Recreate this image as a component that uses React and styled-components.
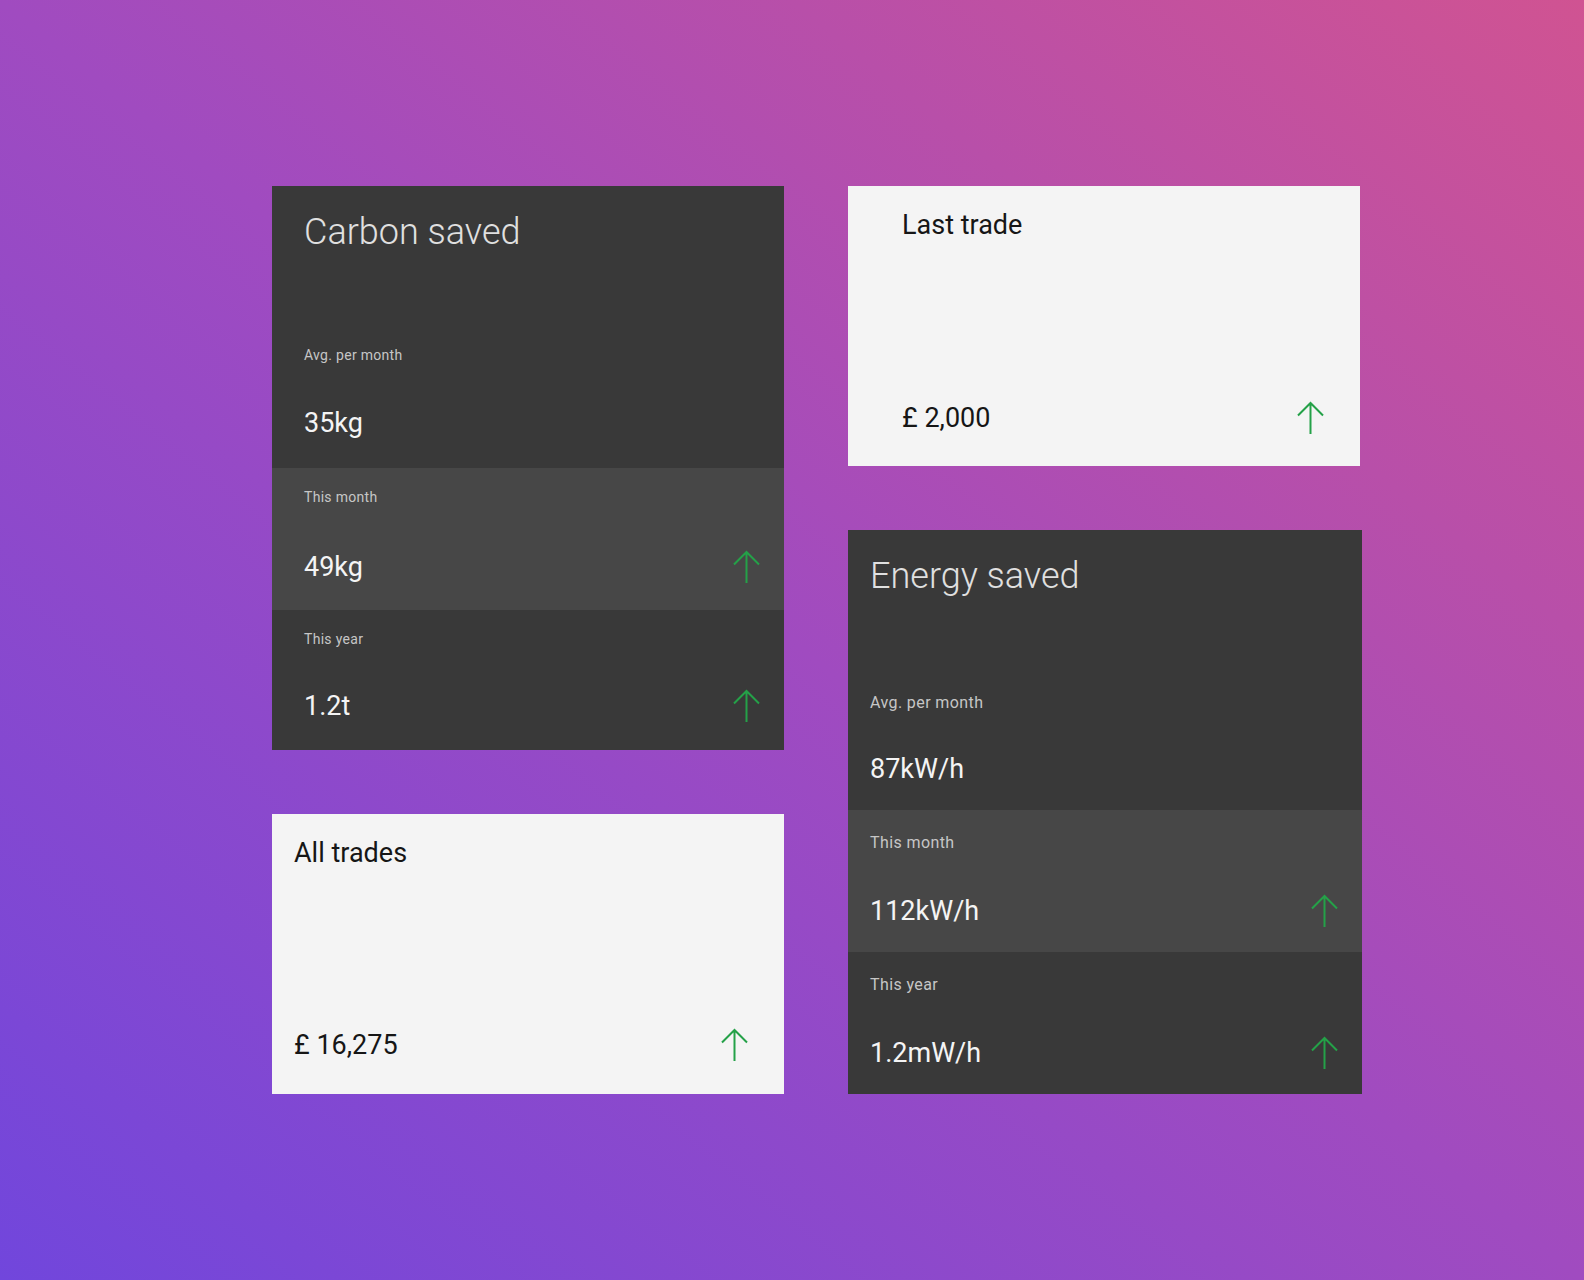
import React from "react";
import styled, { createGlobalStyle } from "styled-components";

const GlobalStyle = createGlobalStyle`
  html, body {
    margin: 0;
    padding: 0;
  }
  body {
    font-family: Roboto, "Noto Sans", sans-serif;
    -webkit-font-smoothing: antialiased;
  }
`;

const Page = styled.div`
  width: 1584px;
  height: 1280px;
  box-sizing: border-box;
  padding: 186px 0 0 272px;
  background: linear-gradient(to top right, #7146dc 0%, #a04bc0 50%, #d05392 100%);
  display: flex;
  gap: 64px;
`;

const Column = styled.div`
  display: flex;
  flex-direction: column;
  align-items: flex-start;
  gap: 64px;
  width: ${({ width }) => width}px;
`;

const DarkCard = styled.section`
  background: #393939;
  width: ${({ width }) => width}px;
  display: flex;
  flex-direction: column;
`;

const TitleBlock = styled.div`
  height: 140px;
  box-sizing: border-box;
  padding: 24px ${({ pad }) => pad}px 0;
`;

const Title = styled.h2`
  margin: 0;
  font-size: 36px;
  line-height: 44px;
  font-weight: 300;
  color: #e0e0e0;
`;

const StatRow = styled.div`
  height: ${({ h }) => h}px;
  box-sizing: border-box;
  padding: ${({ top }) => top}px 24px ${({ bottom }) => bottom}px ${({ pad }) => pad}px;
  background: ${({ highlight }) => (highlight ? "#474747" : "transparent")};
  display: flex;
  flex-direction: column;
  justify-content: space-between;
`;

const Label = styled.div`
  font-size: ${({ size }) => size}px;
  line-height: 18px;
  letter-spacing: ${({ size }) => (size > 14 ? 0.4 : 0.3)}px;
  color: #c6c6c6;
`;

const ValueLine = styled.div`
  display: flex;
  align-items: center;
  justify-content: space-between;
`;

const Value = styled.div`
  font-size: 27px;
  line-height: 32px;
  font-weight: 400;
  color: ${({ dark }) => (dark ? "#161616" : "#f4f4f4")};
`;

const LightCard = styled.section`
  background: #f4f4f4;
  width: ${({ width }) => width}px;
  height: 280px;
  box-sizing: border-box;
  padding: 23px 36px ${({ bottom }) => bottom}px ${({ pad }) => pad}px;
  display: flex;
  flex-direction: column;
  justify-content: space-between;
`;

const LightTitle = styled.h3`
  margin: 0;
  font-size: 27px;
  line-height: 32px;
  font-weight: 400;
  color: #161616;
`;

const ArrowUp = () => (
  <svg width="27" height="33" viewBox="0 0 27 33" fill="none">
    <path
      d="M13.5 2V33M1 14.5L13.5 2L26 14.5"
      stroke="#24a148"
      strokeWidth="2"
    />
  </svg>
);

const StatCard = ({ title, width, pad, labelSize, labelTop, rows }) => (
  <DarkCard width={width}>
    <TitleBlock pad={pad}>
      <Title>{title}</Title>
    </TitleBlock>
    {rows.map((row) => (
      <StatRow
        key={row.label}
        pad={pad}
        top={labelTop}
        h={row.h}
        bottom={row.bottom}
        highlight={row.highlight}
      >
        <Label size={labelSize}>{row.label}</Label>
        <ValueLine>
          <Value>{row.value}</Value>
          {row.up && <ArrowUp />}
        </ValueLine>
      </StatRow>
    ))}
  </DarkCard>
);

const TradeCard = ({ title, value, width, pad, bottom }) => (
  <LightCard width={width} pad={pad} bottom={bottom}>
    <LightTitle>{title}</LightTitle>
    <ValueLine>
      <Value dark>{value}</Value>
      <ArrowUp />
    </ValueLine>
  </LightCard>
);

const carbonRows = [
  { label: "Avg. per month", value: "35kg", h: 142, bottom: 29 },
  { label: "This month", value: "49kg", h: 142, bottom: 27, highlight: true, up: true },
  { label: "This year", value: "1.2t", h: 140, bottom: 28, up: true },
];

const energyRows = [
  { label: "Avg. per month", value: "87kW/h", h: 140, bottom: 25 },
  { label: "This month", value: "112kW/h", h: 142, bottom: 25, highlight: true, up: true },
  { label: "This year", value: "1.2mW/h", h: 142, bottom: 25, up: true },
];

export default function App() {
  return (
    <>
      <GlobalStyle />
      <Page>
        <Column width={512}>
          <StatCard
            title="Carbon saved"
            width={512}
            pad={32}
            labelSize={14}
            labelTop={20}
            rows={carbonRows}
          />
          <TradeCard title="All trades" value="£ 16,275" width={512} pad={22} bottom={33} />
        </Column>
        <Column width={514}>
          <TradeCard title="Last trade" value="£ 2,000" width={512} pad={54} bottom={32} />
          <StatCard
            title="Energy saved"
            width={514}
            pad={22}
            labelSize={16}
            labelTop={24}
            rows={energyRows}
          />
        </Column>
      </Page>
    </>
  );
}
